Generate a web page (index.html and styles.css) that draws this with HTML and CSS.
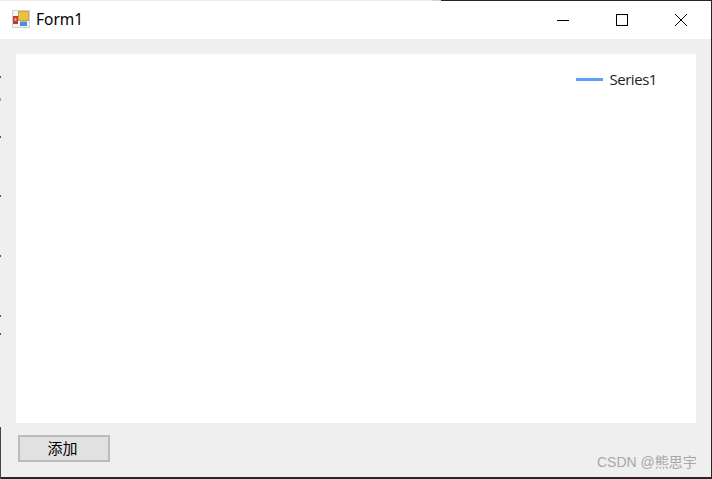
FILE: index.html
```html
<!DOCTYPE html>
<html lang="zh">
<head>
<meta charset="utf-8">
<title>Form1</title>
<link rel="stylesheet" href="styles.css">
</head>
<body>
<div class="window">
  <div class="top-edge"><span class="edge-light"></span><span class="edge-blue"></span><span class="edge-dark"></span></div>
  <header class="titlebar">
    <svg class="app-icon" width="18" height="18" viewBox="0 0 18 18">
      <rect x="0" y="0" width="18" height="18" fill="#d2d2d2"/>
      <rect x="1" y="1" width="16" height="16" fill="#f4f4f4"/>
      <rect x="1" y="6" width="5" height="8" fill="#c23a32"/>
      <rect x="2.5" y="8" width="2" height="3" fill="#eda09a"/>
      <rect x="6.5" y="1.5" width="10" height="9" fill="#f0c03a" stroke="#c9a544"/>
      <rect x="8" y="11.5" width="7" height="4.5" fill="#4a8ce0"/>
    </svg>
    <span class="title">Form1</span>
    <div class="controls">
      <span class="ctl"><svg width="12" height="12" viewBox="0 0 12 12"><path d="M0 6.5H12" stroke="#000" fill="none"/></svg></span>
      <span class="ctl"><svg width="12" height="12" viewBox="0 0 12 12"><rect x="0.5" y="0.5" width="11" height="11" stroke="#000" fill="none"/></svg></span>
      <span class="ctl"><svg width="12" height="12" viewBox="0 0 12 12"><path d="M0 0L12 12M12 0L0 12" stroke="#000" fill="none"/></svg></span>
    </div>
  </header>
  <main class="client">
    <section class="chart">
      <div class="legend"><span class="legend-line"></span><span class="legend-text">Series1</span></div>
    </section>
    <div class="actions"><button class="btn" type="button">添加</button></div>
  </main>
  <span class="watermark">CSDN @熊思宇</span>
</div>
<span class="tick t1"></span><span class="tick t2"></span><span class="tick t3"></span><span class="tick t4"></span><span class="tick t5"></span><span class="tick t6"></span><span class="tick t7"></span>
<span class="left-edge"></span>
</body>
</html>
```
FILE: styles.css
```css
* { box-sizing: border-box; }
html, body { margin: 0; padding: 0; }
body {
  width: 712px;
  height: 479px;
  overflow: hidden;
  position: relative;
  background: #fff;
  font-family: "Liberation Sans", "Noto Sans CJK SC", sans-serif;
}
.window {
  width: 712px;
  height: 479px;
  display: flex;
  flex-direction: column;
  border-right: 1px solid #262626;
  border-bottom: 2px solid #262626;
  position: relative;
}
.top-edge { display: flex; height: 1px; flex: none; }
.edge-light { width: 432px; background: #ececec; }
.edge-blue { width: 9px; background: #c9d5e4; }
.edge-dark { flex: 1; background: #262626; }
.titlebar {
  flex: none;
  height: 38px;
  background: #fff;
  display: flex;
  align-items: center;
  padding-left: 12px;
}
.app-icon { flex: none; margin-top: -2px; }
.title {
  margin-left: 6px;
  margin-top: -2px;
  font-family: "Noto Sans", sans-serif;
  font-size: 15.5px;
  color: #000;
}
.controls { margin-left: auto; display: flex; margin-right: 1px; }
.ctl {
  width: 59px;
  height: 38px;
  display: flex;
  align-items: center;
  justify-content: center;
}
.client {
  flex: 1;
  background: #efefef;
  padding: 15px 15px 0 16px;
  display: flex;
  flex-direction: column;
}
.chart {
  height: 369px;
  background: #fff;
  flex: none;
  display: flex;
  justify-content: flex-end;
  align-items: flex-start;
  padding: 16px 39px 0 0;
}
.legend { display: flex; align-items: center; gap: 6px; }
.legend-line { width: 27px; height: 3px; background: #5c9ff4; }
.legend-text { font-family: "Open Sans", sans-serif; font-size: 15px; letter-spacing: -0.45px; color: #222; line-height: 18px; }
.actions { padding: 12px 0 0 2px; }
.btn {
  display: block;
  width: 92px;
  height: 27px;
  background: #e1e1e1;
  border: 2px solid #bcbcbc;
  border-radius: 0;
  padding: 0 3px 2px 0;
  font-family: "Noto Sans CJK SC", sans-serif;
  font-size: 15px;
  color: #000;
}
.watermark {
  position: absolute;
  left: 597px;
  top: 453px;
  font-family: "Liberation Sans", "Noto Sans CJK SC", sans-serif;
  font-size: 14px;
  line-height: 18px;
  color: #a8a8a8;
  white-space: nowrap;
}
.tick { position: absolute; left: 0; width: 1px; height: 2px; background: #555; }
.t1 { top: 76px; }
.t2 { top: 98px; background: #7fa8e8; height: 3px; }
.t3 { top: 136px; }
.t4 { top: 195px; }
.t5 { top: 255px; }
.t6 { top: 315px; }
.t7 { top: 333px; }
.left-edge { position: absolute; left: 0; top: 427px; bottom: 0; width: 1px; background: #444; }
```
